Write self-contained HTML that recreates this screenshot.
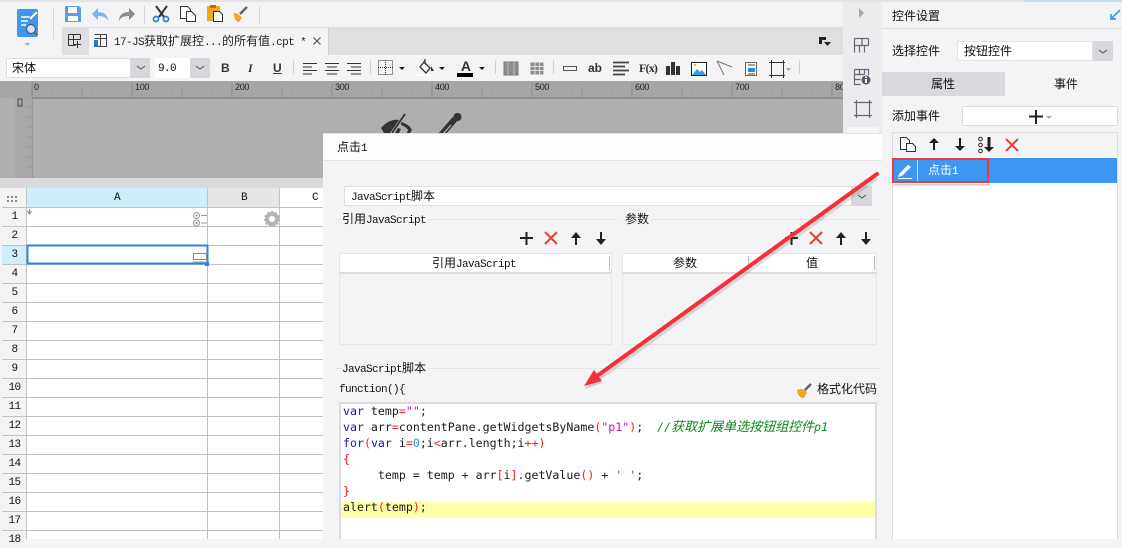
<!DOCTYPE html>
<html><head><meta charset="utf-8"><style>
html,body{margin:0;padding:0}
body{width:1122px;height:539px;position:relative;overflow:hidden;background:#f4f4f7;font:12px/16px "Liberation Mono","Noto Sans CJK SC",monospace;color:#111}
.b{position:absolute}
.t{position:absolute;white-space:nowrap;font:12px/16px "Liberation Mono","Noto Sans CJK SC",monospace;color:#111}
.t i{font-style:normal;font-size:11px;letter-spacing:-.6px}
.ru{position:absolute;top:80px;white-space:nowrap;font:9px/14px "Liberation Sans",sans-serif;letter-spacing:-.3px;color:#222}
.code{position:absolute;left:343px;white-space:pre;font:11.6px/16px "DejaVu Sans Mono",monospace;color:#1a1a1a;height:16px}
.k{color:#1717c8}.r{color:#e8261a}.s{color:#d010b0}.c{color:#0a8a1a;font-style:italic}.n{color:#3a8ad8}
.code b{font-weight:400}
.rn{position:absolute;left:3px;width:23px;text-align:center;font:11px/16px "Liberation Mono",monospace;letter-spacing:-.6px;color:#111}
svg{position:absolute;left:0;top:0}
</style></head><body>
<div class="b" style="left:0;top:0;width:1122px;height:2px;background:#e4e4e6"></div>
<div class="b" style="left:1024px;top:0;width:98px;height:2px;background:#bfe0f3"></div>
<div class="b" style="left:62px;top:27px;width:781px;height:28px;background:#dfdfe2"></div>
<div class="b" style="left:89px;top:28px;width:239px;height:27px;background:#f4f4f7;border-right:1px solid #cfcfd2"></div>
<div class="b" style="left:0;top:81px;width:843px;height:17px;background:#a6a6a6"></div>
<div class="b" style="left:0;top:98px;width:843px;height:80px;background:#afafaf"></div>
<div class="b" style="left:15px;top:98px;width:17px;height:80px;background:#a8a8a8"></div>
<div class="b" style="left:32px;top:97px;width:811px;height:2px;background:#8e8e8e"></div>
<div class="b" style="left:32px;top:81px;width:1px;height:97px;background:#969696"></div>
<div class="b" style="left:0;top:178px;width:323px;height:10px;background:#d9d9db"></div>
<!-- format combos -->
<div class="b" style="left:6px;top:58px;width:125px;height:20px;background:#fff;border:1px solid #ddd;box-sizing:border-box"></div>
<div class="b" style="left:131px;top:58px;width:19px;height:20px;background:#d6d7db"></div>
<div class="b" style="left:155px;top:58px;width:35px;height:20px;background:#fff"></div>
<div class="b" style="left:190px;top:58px;width:20px;height:20px;background:#d6d7db"></div>
<div class="t" style="left:12px;top:61px">宋体</div>
<div class="t" style="left:158px;top:60px"><i>9.0</i></div>
<div class="t" style="left:114px;top:34px;color:#222"><i>17-JS</i>获取扩展控<i>...</i>的所有值<i>.cpt *</i></div>
<div class="t" style="left:221px;top:60px;font:bold 12px/16px 'Liberation Sans';color:#333">B</div>
<div class="t" style="left:248px;top:60px;font:italic bold 12px/16px 'Liberation Serif';color:#333">I</div>
<div class="t" style="left:273px;top:60px;font:bold 12px/16px 'Liberation Sans';color:#333;text-decoration:underline">U</div>
<div class="t" style="left:588px;top:60px;font:bold 12px/16px 'Liberation Sans';color:#333">ab</div>
<div class="t" style="left:639px;top:60px;font:bold 12px/16px 'Liberation Serif';letter-spacing:-.8px;color:#333">F(x)</div>
<div class="t" style="left:457px;top:58px;font:bold 14px/16px 'Liberation Sans';color:#333">&nbsp;A</div>
<!-- ruler labels -->
<div class="ru" style="left:34px">0</div>
<div class="ru" style="left:135px">100</div>
<div class="ru" style="left:235px">200</div>
<div class="ru" style="left:335px">300</div>
<div class="ru" style="left:435px">400</div>
<div class="ru" style="left:535px">500</div>
<div class="ru" style="left:635px">600</div>
<div class="ru" style="left:735px">700</div>
<div class="ru" style="left:835px;width:8px;overflow:hidden">800</div>
<!-- sheet -->
<div class="b" style="left:2px;top:188px;width:321px;height:351px;background:#fff"></div>
<div class="b" style="left:2px;top:188px;width:24px;height:351px;background:#f4f4f5"></div>
<div class="b" style="left:27px;top:188px;width:181px;height:19px;background:#cfeefb"></div>
<div class="b" style="left:208px;top:188px;width:71px;height:19px;background:#e6e6e6"></div>
<div class="b" style="left:2px;top:245px;width:24px;height:19px;background:#cfeefb"></div>
<div class="rn" style="left:113px;width:8px;top:190px">A</div>
<div class="rn" style="left:240px;width:8px;top:190px">B</div>
<div class="rn" style="left:311px;width:8px;top:190px">C</div>
<div class="rn" style="top:209px">1</div><div class="rn" style="top:228px">2</div><div class="rn" style="top:247px">3</div><div class="rn" style="top:266px">4</div><div class="rn" style="top:285px">5</div><div class="rn" style="top:304px">6</div><div class="rn" style="top:323px">7</div><div class="rn" style="top:342px">8</div><div class="rn" style="top:361px">9</div><div class="rn" style="top:380px">10</div><div class="rn" style="top:399px">11</div><div class="rn" style="top:418px">12</div><div class="rn" style="top:437px">13</div><div class="rn" style="top:456px">14</div><div class="rn" style="top:475px">15</div><div class="rn" style="top:494px">16</div><div class="rn" style="top:513px">17</div><div class="rn" style="top:532px">18</div>
<svg width="1122" height="539" fill="none">
<g stroke="#c2c2c2" shape-rendering="crispEdges">
<path d="M2 207.500H323M2 226.500H323M2 245.500H323M2 264.500H323M2 283.500H323M2 302.500H323M2 321.500H323M2 340.500H323M2 359.500H323M2 378.500H323M2 397.500H323M2 416.500H323M2 435.500H323M2 454.500H323M2 473.500H323M2 492.500H323M2 511.500H323M2 530.500H323"/>
<path d="M26.500 188V539M207.500 188V539M279.500 188V539"/>
</g>
<rect x="27.500" y="245.500" width="180" height="18" stroke="#2f81e8" stroke-width="2"/>
<rect x="205" y="262" width="4" height="4" fill="#2f81e8"/>
<g fill="#8a8a8a"><rect x="7" y="196" width="2" height="2"/><rect x="11" y="196" width="2" height="2"/><rect x="15" y="196" width="2" height="2"/><rect x="7" y="200" width="2" height="2"/><rect x="11" y="200" width="2" height="2"/><rect x="15" y="200" width="2" height="2"/></g>
<path d="M29.500 209v4M27.500 211l2 3 2-3" stroke="#888"/>
<g stroke="#999"><circle cx="196.500" cy="215.500" r="3"/><circle cx="196.500" cy="223" r="3"/><path d="M201 215.500h6M201 223h6"/></g>
<circle cx="196.500" cy="215.500" r="1.200" fill="#999"/><circle cx="196.500" cy="223" r="1.200" fill="#999"/>
<circle cx="272" cy="219" r="5" stroke="#b4b4b4" stroke-width="4"/><circle cx="272" cy="219" r="7" stroke="#b4b4b4" stroke-width="2" stroke-dasharray="2 2"/>
<rect x="193.500" y="253.500" width="13" height="6" stroke="#888"/><path d="M193 262h13" stroke="#aaa"/>
<!-- ruler ticks -->
<g shape-rendering="crispEdges">
<path d="M32 83V98M132 83V98M232 83V98M332 83V98M432 83V98M532 83V98M632 83V98M732 83V98M832 83V98" stroke="#8c8c8c"/>
<path d="M82 87V98M182 87V98M282 87V98M382 87V98M482 87V98M582 87V98M682 87V98M782 87V98" stroke="#949494"/>
<path d="M42 93V98M52 93V98M62 93V98M72 93V98M92 93V98M102 93V98M112 93V98M122 93V98M142 93V98M152 93V98M162 93V98M172 93V98M192 93V98M202 93V98M212 93V98M222 93V98M242 93V98M252 93V98M262 93V98M272 93V98M292 93V98M302 93V98M312 93V98M322 93V98M342 93V98M352 93V98M362 93V98M372 93V98M392 93V98M402 93V98M412 93V98M422 93V98M442 93V98M452 93V98M462 93V98M472 93V98M492 93V98M502 93V98M512 93V98M522 93V98M542 93V98M552 93V98M562 93V98M572 93V98M592 93V98M602 93V98M612 93V98M622 93V98M642 93V98M652 93V98M662 93V98M672 93V98M692 93V98M702 93V98M712 93V98M722 93V98M742 93V98M752 93V98M762 93V98M772 93V98M792 93V98M802 93V98M812 93V98M822 93V98" stroke="#999"/>
<path d="M26 107H32M26 117H32M26 127H32M26 137H32M26 147H32M26 157H32M26 167H32" stroke="#969696"/>
</g>
<rect x="18" y="99" width="4" height="7" stroke="#333" stroke-width=".8"/>
<!-- app logo -->
<rect x="17" y="9" width="21" height="28" rx="2" fill="#3d96f2"/>
<path d="M21 17h9M21 21h7M21 25h5" stroke="#fff" stroke-width="1.500"/>
<path d="M29 18l7-7 2 2-7 7z" fill="#fff" stroke="#666" stroke-width=".5"/>
<circle cx="31" cy="29" r="4.500" fill="#cfe3f5" stroke="#556" stroke-width="1.200"/><path d="M34 32l3 3" stroke="#556" stroke-width="1.500"/>
<path d="M25 43h5l-2.500 3z" fill="#aaa"/>
<path d="M53.500 8V39" stroke="#d6d6d8"/>
<!-- save / undo / redo -->
<path d="M65 6h14l2 2v14H65z" fill="#5c9ee6"/><rect x="68" y="7" width="9" height="6" fill="#fff"/><rect x="68" y="16" width="10" height="5" fill="#fff"/>
<path d="M108 21c0-6-4-9-10-9V8l-6 6 6 6v-4c5 0 8 1 10 5z" fill="#7fb3e6"/>
<path d="M119 21c0-6 4-9 10-9V8l6 6-6 6v-4c-5 0-8 1-10 5z" fill="#8c8c8c"/>
<path d="M144.500 6V24M259.500 6V24" stroke="#d6d6d8"/>
<path d="M156 6l8 11M167 6l-8 11" stroke="#333" stroke-width="2"/><circle cx="156" cy="19" r="2.500" stroke="#2a7fd8" stroke-width="1.700"/><circle cx="166" cy="19" r="2.500" stroke="#2a7fd8" stroke-width="1.700"/>
<path d="M180.500 6.500h7l3 3v9h-10z" fill="#fff" stroke="#333"/><path d="M186.500 11.500h5l4 4v6h-9z" fill="#fff" stroke="#333"/>
<rect x="207" y="6" width="13" height="15" fill="#f2a81d"/><rect x="210" y="5" width="6" height="3" fill="#c8601a"/><path d="M213.500 11.500h6l3 3v7h-9z" fill="#fff" stroke="#333"/>
<path d="M234 13c3 0 6 2 8 5l-3 4c-2 0-5-2-5-9z" fill="#f2a81d"/><path d="M240 14l7-7" stroke="#666" stroke-width="2.500"/>
<!-- tab icons -->
<path d="M68.500 34.500h12M68.500 39.500h12M68.500 34.500v11M73.500 34.500v11M80.500 34.500v5M68.500 45.500h7M77.500 41v7M74 44.500h7" stroke="#333"/>
<path d="M94.500 34.500h12v12h-12M94.500 38.500h12M100.500 34.500v12M106.500 34.500v12" stroke="#444"/><path d="M94 40h4v7h-4z" fill="#1f7ac4"/>
<path d="M313.500 37.500l7 7M320.500 37.500l-7 7" stroke="#555" stroke-width="1.200"/>
<!-- chevrons and format icons -->
<path d="M137 66l4 3 4-3M196 66l4 3 4-3" stroke="#555"/>
<path d="M293.500 60v14" stroke="#cfcfd2"/>
<path d="M303 63.500h14M303 67h9M303 70.500h14M303 74h9M325 63.500h14M327 67h10M325 70.500h14M327 74h10M347 63.500h14M351 67h10M347 70.500h14M351 74h10" stroke="#333"/>
<path d="M370.500 60v14M495.500 60v14M553.500 60v14M799.500 60v14" stroke="#cfcfd2"/>
<rect x="378.500" y="60.500" width="14" height="14" stroke="#333" stroke-dasharray="1 1"/><path d="M378 67.500h15M385.500 60v15" stroke="#333" stroke-dasharray="1 1"/>
<path d="M399 67h6l-3 3zM439 67h6l-3 3zM479 67h6l-3 3z" fill="#222"/>
<path d="M424 62l6 6-4 5-6-6zM425 59v5" stroke="#333" stroke-width="1.300"/><path d="M431 66l3 5h-3z" fill="#333"/><rect x="417" y="74" width="16" height="2" fill="#fff"/>
<rect x="457" y="73" width="16" height="4" fill="#000"/>
<rect x="504" y="62" width="14" height="13" fill="#8d8d8d" stroke="#777"/><path d="M508 62v13M514 62v13" stroke="#bbb"/>
<rect x="530.500" y="62.500" width="13" height="12" fill="#8d8d8d"/><path d="M530 66.500h14M530 70.500h14M535 62v13M539.500 62v13" stroke="#ddd"/>
<rect x="563.500" y="66.500" width="13" height="4" stroke="#555"/>
<path d="M613 62.500h16M613 66.500h12M613 70.500h16M613 74.500h12" stroke="#444" stroke-width="1.700"/>
<path d="M666 66h4v9h-4zM671 62h4v13h-4zM676 66h4v9h-4z" fill="#333"/>
<rect x="691.500" y="62.500" width="15" height="13" fill="#fff" stroke="#222"/><path d="M692 75l5-6 3 3 2-2 4 5z" fill="#2f9fe0"/><circle cx="695" cy="65" r="1.200" fill="#f2b21d"/>
<path d="M717 61l15 6M717 61l7 14" stroke="#777"/>
<rect x="745.500" y="62.500" width="11" height="13" fill="#fff" stroke="#666"/><rect x="748" y="68" width="7" height="4" fill="#2f86d8"/><path d="M748 65h7M748 74h7" stroke="#444"/>
<path d="M769 62.500h16M769 75.500h16M771.500 60v18M783.500 60v18" stroke="#333"/><path d="M786 68h5l-2.500 3z" fill="#aaa"/>
<path d="M819 37h7v3h-4v4h-3z" fill="#222"/><path d="M824 42h7l-3.500 4z" fill="#222"/>
<!-- eye / pencil on canvas -->
<path d="M381 128c5-6 12-9 18-8l-9 13h-6z" fill="#333"/><path d="M401 122c5 1 9 4 11 8l-2 3h-3l1-3c-1-2-4-4-7-5zM395 133l3-5 3 1-2 4z" fill="#333"/><path d="M392 133l13-19" stroke="#333" stroke-width="1.800"/>
<path d="M441 135l14-16" stroke="#333" stroke-width="6"/><path d="M443 134l8-9" stroke="#afafaf" stroke-width="1.300"/><circle cx="457.500" cy="117" r="4" fill="#333"/>
</svg>
<!-- right strip -->
<div class="b" style="left:843px;top:2px;width:39px;height:131px;background:#ececee"></div>
<div class="b" style="left:847px;top:127px;width:32px;height:6px;background:#f6f6f8"></div>
<svg width="1122" height="539" fill="none">
<path d="M859 8l5 5-5 5z" fill="#a8a8a8"/>
<path d="M854.500 38.500h14M854.500 38.500v14M854.500 45.500h14M868.500 38.500v7M859.500 45.500v7M864.500 45.500v7M862 38v7" stroke="#667" stroke-width="1.200"/>
<path d="M854.500 69.500h14v6M854.500 69.500v15h6M854.500 74.500h10M854.500 79.500h6M859.500 69.500v5M864.500 69.500v5" stroke="#667" stroke-width="1.200"/><circle cx="866" cy="80" r="4.500" fill="#556"/><rect x="865" y="79" width="2" height="4" fill="#fff"/><rect x="865" y="76.500" width="2" height="1.500" fill="#fff"/>
<path d="M856.500 102.500h13v13h-13zM854 102.500h18M854 115.500h18M856.500 100v18M869.500 100v18" stroke="#667" stroke-width="1.200"/>
</svg>
<!-- right panel -->
<div class="b" style="left:882px;top:28px;width:240px;height:1px;background:#dcdcde"></div>
<div class="t" style="left:892px;top:9px">控件设置</div>
<div class="t" style="left:892px;top:44px">选择控件</div>
<div class="b" style="left:957px;top:41px;width:136px;height:20px;background:#fff;border:1px solid #e2e2e4;box-sizing:border-box"></div>
<div class="b" style="left:1093px;top:41px;width:20px;height:20px;background:#d6d7db"></div>
<div class="t" style="left:964px;top:44px">按钮控件</div>
<div class="b" style="left:882px;top:72px;width:123px;height:24px;background:#d8d9dd"></div>
<div class="t" style="left:931px;top:77px">属性</div>
<div class="t" style="left:1054px;top:77px">事件</div>
<div class="t" style="left:892px;top:109px">添加事件</div>
<div class="b" style="left:962px;top:106px;width:156px;height:20px;background:#fff;border:1px solid #dcdcde;box-sizing:border-box"></div>
<div class="b" style="left:892px;top:132px;width:226px;height:407px;background:#fff;border:1px solid #dcdcde;border-bottom:0;box-sizing:border-box"></div>
<div class="b" style="left:893px;top:133px;width:224px;height:24px;background:#f4f4f7"></div>
<div class="b" style="left:893px;top:158px;width:224px;height:25px;background:#3d96f2"></div>
<!-- dialog -->
<div class="b" style="left:323px;top:133px;width:559px;height:406px;background:#f4f4f7;border-top:1px solid #e2e2e2;box-sizing:border-box"></div>
<div class="b" style="left:323px;top:134px;width:559px;height:27px;background:#fdfdfd;border-bottom:1px solid #e4e4e6;box-sizing:border-box"></div>
<div class="t" style="left:337px;top:140px">点击<i>1</i></div>
<div class="b" style="left:344px;top:186px;width:508px;height:20px;background:#fff;border:1px solid #dedee0;box-sizing:border-box"></div>
<div class="b" style="left:852px;top:186px;width:20px;height:20px;background:#d6d7db"></div>
<div class="t" style="left:351px;top:189px"><i>JavaScript</i>脚本</div>
<div class="b" style="left:336px;top:219px;width:280px;height:1px;background:#e4e4e6"></div>
<div class="b" style="left:622px;top:219px;width:258px;height:1px;background:#e4e4e6"></div>
<div class="t" style="left:342px;top:212px;background:#f4f4f7;padding-right:2px">引用<i>JavaScript</i></div>
<div class="t" style="left:625px;top:212px;background:#f4f4f7;padding-right:2px">参数</div>
<div class="b" style="left:339px;top:253px;width:273px;height:92px;border:1px solid #e6e6e8;box-sizing:border-box"></div>
<div class="b" style="left:622px;top:253px;width:255px;height:92px;border:1px solid #e6e6e8;box-sizing:border-box"></div>
<div class="b" style="left:340px;top:254px;width:271px;height:18px;background:#fff;border-bottom:2px solid #dcdcdc"></div>
<div class="b" style="left:623px;top:254px;width:253px;height:18px;background:#fff;border-bottom:2px solid #dcdcdc"></div>
<div class="b" style="left:609px;top:256px;width:1px;height:14px;background:#bbb"></div>
<div class="b" style="left:748px;top:256px;width:1px;height:14px;background:#bbb"></div>
<div class="b" style="left:874px;top:256px;width:1px;height:14px;background:#bbb"></div>
<div class="t" style="left:432px;top:256px">引用<i>JavaScript</i></div>
<div class="t" style="left:673px;top:256px">参数</div>
<div class="t" style="left:806px;top:256px">值</div>
<div class="b" style="left:336px;top:368px;width:544px;height:1px;background:#e4e4e6"></div>
<div class="t" style="left:342px;top:361px;background:#f4f4f7;padding-right:2px"><i>JavaScript</i>脚本</div>
<div class="t" style="left:339px;top:381px"><i>function(){</i></div>
<div class="t" style="left:817px;top:382px">格式化代码</div>
<div class="b" style="left:339px;top:402px;width:538px;height:137px;background:#fff;border:2px solid #dcdcde;border-bottom:0;box-sizing:border-box"></div>
<div class="b" style="left:341px;top:502px;width:534px;height:16px;background:#ffffaa"></div>
<div class="code" style="top:403px"><span class="k">var</span> temp<b class="r">=</b><b class="s">""</b>;</div>
<div class="code" style="top:419px"><span class="k">var</span> arr<b class="r">=</b>contentPane.getWidgetsByName<b class="r">(</b><b class="s">"p1"</b><b class="r">)</b>;  <span class="c" style="font-family:'DejaVu Sans Mono','Noto Sans CJK SC',monospace">//<span style="font-size:13px;line-height:13px">获取扩展单选按钮组控件</span>p1</span></div>
<div class="code" style="top:435px"><span class="k">for</span><b class="r">(</b><span class="k">var</span> i<b class="r">=</b><span class="n">0</span>;i<b class="r">&lt;</b>arr.length;i<b class="r">++)</b></div>
<div class="code" style="top:451px"><b class="r">{</b></div>
<div class="code" style="top:467px">     temp = temp + arr<b class="r">[</b>i<b class="r">]</b>.getValue<b class="r">()</b> + <b class="s">' '</b>;</div>
<div class="code" style="top:483px"><b class="r">}</b></div>
<div class="code" style="top:499px">alert<b class="r">(</b>temp<b class="r">)</b>;</div>
<div class="t" style="left:928px;top:163px;color:#fff">点击<i>1</i></div>
<svg width="1122" height="539" fill="none">
<path d="M858 195l4 3 4-3M1099 50l4 3 4-3" stroke="#555"/>
<path d="M1116 19h-5v-5M1111 19l9-9" stroke="#3d96f2" stroke-width="1.700"/>
<path d="M1029 116.500h14M1036 110v14" stroke="#222" stroke-width="2"/><path d="M1046 116h6l-3 3z" fill="#aaa"/>
<!-- list toolbar -->
<path d="M900.500 137.500h6l3 3v9h-9z" fill="#fff" stroke="#333"/><path d="M906.500 143.500h6l3 3v5h-9z" fill="#fff" stroke="#333"/>
<path d="M934 150v-10" stroke="#222" stroke-width="2"/><path d="M929 143l5-5 5 5z" fill="#222"/>
<path d="M960 138v10" stroke="#222" stroke-width="2"/><path d="M955 146l5 5 5-5z" fill="#222"/>
<circle cx="980.500" cy="139" r="1.800" stroke="#222"/><circle cx="980.500" cy="145" r="1.800" stroke="#222"/><circle cx="980.500" cy="151" r="1.800" stroke="#222"/>
<path d="M989 137v11" stroke="#222" stroke-width="3"/><path d="M984 147l5 5 5-5z" fill="#222"/>
<path d="M1006 139l12 12M1018 139l-12 12" stroke="#e63f3a" stroke-width="2"/>
<!-- list row -->
<path d="M899 174l9-9 3 2-9 9-4 1z" fill="#fff"/><path d="M898 178.500h14" stroke="#fff"/><path d="M917.500 160v21" stroke="#cfe4fa"/>
<rect x="894" y="184" width="96" height="1.500" fill="#555" fill-opacity=".3"/>
<rect x="893" y="159" width="95" height="23" stroke="#f0393c" stroke-width="2"/>
<!-- dialog icons -->
<g stroke="#222" stroke-width="2"><path d="M520 238h13M526.500 232v13"/></g>
<path d="M545 232l12 12M557 232l-12 12M810 232l12 12M822 232l-12 12" stroke="#e63f3a" stroke-width="2"/>
<path d="M576 245v-9M841 245v-9" stroke="#222" stroke-width="2"/><path d="M571 238l5-6 5 6zM836 238l5-6 5 6z" fill="#222"/>
<path d="M601 232v9M866 232v9" stroke="#222" stroke-width="2"/><path d="M596 239l5 6 5-6zM861 239l5 6 5-6z" fill="#222"/>
<path d="M785 238h13M791.500 232v13" stroke="#222" stroke-width="2"/>
<path d="M797 390c4-2 8-1 10 2l-3 6c-4 0-7-3-7-8z" fill="#f2a81d"/><path d="M805 390l6-6" stroke="#666" stroke-width="2.500"/>
<!-- red arrow -->
<path d="M877 176L600 376" stroke="#555" stroke-opacity=".18" stroke-width="4" transform="translate(0 2)"/>
<path d="M585 387l10-16 7 10z" fill="#555" fill-opacity=".25" transform="translate(0 2)"/>
<path d="M877 174L597 376" stroke="#f5303a" stroke-width="4" stroke-linecap="round"/>
<path d="M584 386l10-16 8 11z" fill="#f5303a"/>
</svg>
</body></html>
